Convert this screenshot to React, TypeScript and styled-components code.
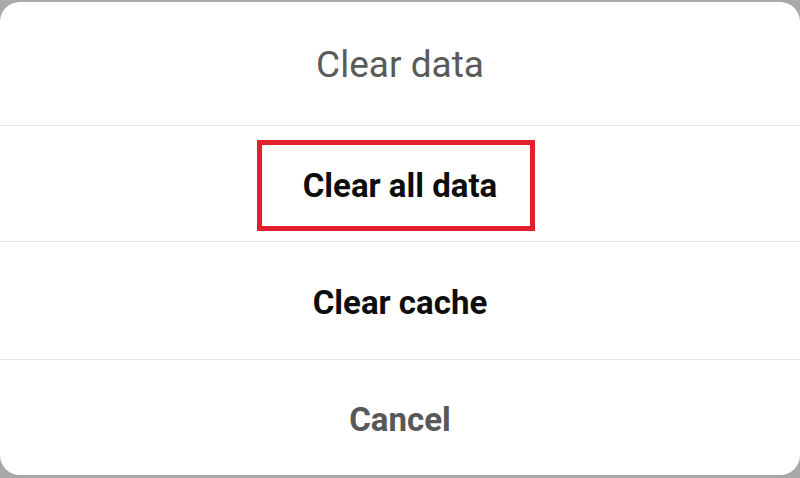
import React from "react";
import styled, { createGlobalStyle } from "styled-components";

const Global = createGlobalStyle`
  html, body {
    margin: 0;
    padding: 0;
    background: #a9a9a9;
    width: 800px;
    height: 478px;
    overflow: hidden;
    font-family: Roboto, "Liberation Sans", Arial, sans-serif;
  }
  * { box-sizing: border-box; }
`;

const Screen = styled.div`
  width: 800px;
  height: 478px;
  padding-top: 2px;
`;

const Dialog = styled.div`
  width: 800px;
  height: 473px;
  background: #ffffff;
  border-radius: 20px;
  display: flex;
  flex-direction: column;
  overflow: hidden;
`;

const Title = styled.div`
  height: 123px;
  display: flex;
  align-items: center;
  justify-content: center;
  font-size: 37px;
  font-weight: 400;
  color: #5a5a5a;
  padding-top: 1px;
`;

const Row = styled.div<{ $h: number; $muted?: boolean }>`
  position: relative;
  height: ${(p) => p.$h}px;
  border-top: 1px solid #e3e3e3;
  display: flex;
  align-items: center;
  justify-content: center;
  font-size: 33px;
  font-weight: 700;
  color: ${(p) => (p.$muted ? "#585858" : "#0d0d0d")};
  padding-top: 3px;
`;

const Highlight = styled.div`
  position: absolute;
  top: 14px;
  left: 257px;
  width: 278px;
  height: 91px;
  border: 5px solid #e5202d;
  pointer-events: none;
`;

export default function App() {
  return (
    <>
      <Global />
      <Screen>
        <Dialog>
          <Title>Clear data</Title>
          <Row $h={116}>
            Clear all data
            <Highlight />
          </Row>
          <Row $h={118}>Clear cache</Row>
          <Row $h={116} $muted>
            Cancel
          </Row>
        </Dialog>
      </Screen>
    </>
  );
}
